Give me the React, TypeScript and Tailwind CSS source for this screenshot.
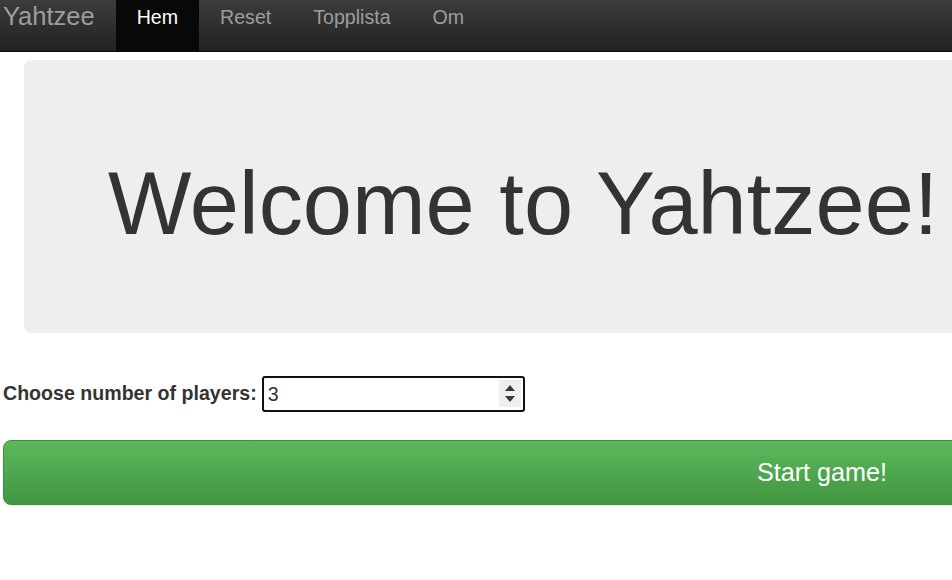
import { useState } from 'react';

const navItems = ['Hem', 'Reset', 'Topplista', 'Om'];

export default function App() {
  const [players, setPlayers] = useState('3');

  return (
    <div className="w-screen h-[580px] overflow-hidden bg-white font-['Liberation_Sans',Arial,sans-serif] text-[#333]">
      {/* Navbar */}
      <nav className="flex h-[52px] items-stretch border-b border-[#080808] bg-gradient-to-b from-[#3c3c3c] to-[#222]">
        <a className="pl-[3px] pr-[21px] pt-[2px] text-[25.5px] leading-[29px] text-[#9d9d9d]">Yahtzee</a>
        <ul className="flex">
          {navItems.map((item, i) => (
            <li
              key={item}
              className={`px-[21px] pt-[6px] text-[19.6px] leading-[22px] ${
                i === 0 ? 'bg-[#080808] text-white' : 'text-[#9d9d9d]'
              }`}
            >
              {item}
            </li>
          ))}
        </ul>
      </nav>

      {/* Jumbotron */}
      <div className="ml-[24px] mt-[8px] w-[1596px] h-[273px] rounded-[8px] bg-[#eee] pl-[84px] pt-[96px]">
        <h1 className="text-[88.4px] leading-[96px] text-[#333] whitespace-nowrap">Welcome to Yahtzee!</h1>
      </div>

      {/* Player count */}
      <div className="flex items-center pl-[3px] mt-[43px]">
        <label className="text-[19.6px] font-bold mr-[5px]">Choose number of players:</label>
        <div className="relative">
          <input
            type="number"
            value={players}
            onChange={(e) => setPlayers(e.target.value)}
            className="w-[263px] h-[36px] rounded-[3px] border-2 border-[#111] pl-[4px] text-[19.6px] text-[#333] outline-none [appearance:textfield] [&::-webkit-inner-spin-button]:appearance-none [&::-webkit-outer-spin-button]:appearance-none"
          />
          <div className="absolute right-[4px] top-[4px] flex h-[27px] w-[22px] flex-col items-center justify-center gap-[5px] bg-[#efefef]">
            <svg width="10" height="6" viewBox="0 0 10 6">
              <path d="M5 0 L10 6 L0 6 Z" fill="#3b3b3b" />
            </svg>
            <svg width="10" height="6" viewBox="0 0 10 6">
              <path d="M0 0 L10 0 L5 6 Z" fill="#3b3b3b" />
            </svg>
          </div>
        </div>
      </div>

      {/* Start button */}
      <div className="pl-[3px] mt-[28px]">
        <button className="w-[1638px] h-[65px] rounded-[8px] border border-[#3e8f3e] bg-gradient-to-b from-[#5cb85c] to-[#419641] text-[25.2px] text-white shadow-[0_1px_2px_rgba(0,0,0,0.1)]">
          Start game!
        </button>
      </div>
    </div>
  );
}
